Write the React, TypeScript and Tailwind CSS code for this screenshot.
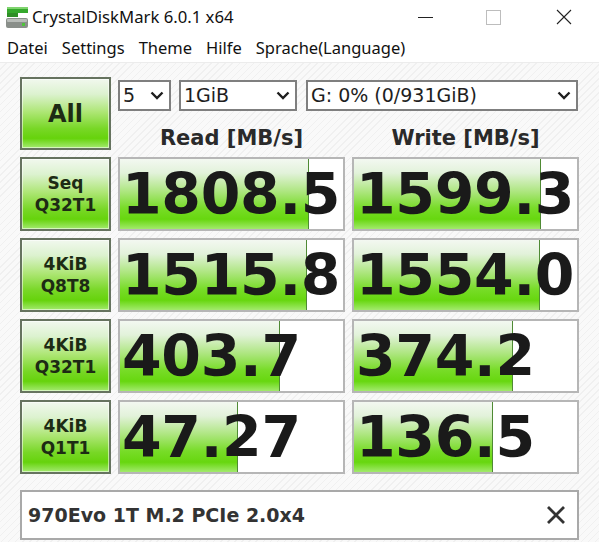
const labelFont = "font-['DejaVu_Sans','Verdana',sans-serif]";

type Row = {
  label: [string, string];
  read: string;
  write: string;
  readBar: number;
  writeBar: number;
};

const ROWS: Row[] = [
  { label: ["Seq", "Q32T1"], read: "1808.5", write: "1599.3", readBar: 189, writeBar: 187 },
  { label: ["4KiB", "Q8T8"], read: "1515.8", write: "1554.0", readBar: 187, writeBar: 186 },
  { label: ["4KiB", "Q32T1"], read: "403.7", write: "374.2", readBar: 160, writeBar: 159 },
  { label: ["4KiB", "Q1T1"], read: "47.27", write: "136.5", readBar: 118, writeBar: 139 },
];

const greenButton =
  "border-2 border-[#66735f] bg-[linear-gradient(180deg,#f1f8ee_0%,#dcf2cf_22%,#ade674_48%,#78d726_72%,#66d30c_86%,#a4ea70_100%)] shadow-[inset_0_0_0_1px_rgba(255,255,255,0.55)]";

const barFill =
  "bg-[linear-gradient(180deg,#f3f8f1_0%,#e2f2da_20%,#aee681_46%,#78dc28_70%,#67d70f_86%,#a2ea6c_100%)]";

function Chevron() {
  return (
    <svg width="14" height="9" viewBox="0 0 14 9" aria-hidden>
      <polyline
        points="1.5,1.5 7,7 12.5,1.5"
        fill="none"
        stroke="#1e1e1e"
        strokeWidth="2.4"
      />
    </svg>
  );
}

function Select({ value, className }: { value: string; className: string }) {
  return (
    <div
      className={`flex h-[31px] items-center justify-between border-2 border-[#7f7f7f] bg-white pl-[3px] pr-[5px] text-[19px] leading-none text-[#1e1e1e] font-['DejaVu_Sans',sans-serif] ${className}`}
    >
      <span>{value}</span>
      <Chevron />
    </div>
  );
}

function ScoreCell({ value, bar }: { value: string; bar: number }) {
  return (
    <div className="relative flex h-[74px] w-[227px] items-center border-2 border-[#b6b6b6] bg-white">
      <div
        className={`absolute inset-y-0 left-0 border-r border-[#4f8a34] ${barFill}`}
        style={{ width: bar }}
      />
      <span
        className={`relative whitespace-nowrap pl-[2px] text-[57px] font-bold leading-none tracking-[-0.3px] text-[#1a1a1a] ${labelFont}`}
      >
        {value}
      </span>
    </div>
  );
}

function AppLogo() {
  return (
    <svg width="24" height="24" viewBox="0 0 24 24" aria-hidden>
      <rect x="2" y="2" width="21" height="6" fill="#35a82c" />
      <rect x="2" y="2" width="21" height="2" fill="#7fd46e" />
      <rect x="2" y="8" width="11" height="4" fill="#2f8f27" />
      <rect x="1" y="13" width="22" height="10" rx="2" fill="#8a8f8a" />
      <rect x="2" y="14" width="20" height="3" rx="1" fill="#b9bdb9" />
      <rect x="17" y="18" width="3" height="3" fill="#4ec43a" />
    </svg>
  );
}

export default function App() {
  return (
    <div className="flex h-[542px] w-[599px] flex-col overflow-hidden bg-white font-['Noto_Sans','Open_Sans',sans-serif]">
      <div className="flex h-[34px] items-center">
        <div className="flex w-[32px] justify-center pl-[2px]">
          <AppLogo />
        </div>
        <span className="text-[16.7px] text-[#111]">CrystalDiskMark 6.0.1 x64</span>
        <div className="ml-auto flex h-full items-center">
          <div className="flex w-[46px] justify-center">
            <div className="h-px w-[15px] bg-[#222]" />
          </div>
          <div className="ml-[22px] flex w-[46px] justify-center">
            <div className="h-[15px] w-[15px] border border-[#bdbdbd]" />
          </div>
          <div className="ml-[25px] mr-[12px] flex w-[46px] justify-center">
            <svg width="16" height="16" viewBox="0 0 16 16" aria-hidden>
              <path d="M1 1 L15 15 M15 1 L1 15" stroke="#222" strokeWidth="1.1" />
            </svg>
          </div>
        </div>
      </div>

      <div className="flex h-[28px] items-center text-[16.5px] text-[#111]">
        <span className="pl-[7px] pr-[7px]">Datei</span>
        <span className="px-[7px]">Settings</span>
        <span className="px-[7px]">Theme</span>
        <span className="px-[7px]">Hilfe</span>
        <span className="px-[7px]">Sprache(Language)</span>
      </div>

      <div className="flex-1 border-t border-[#ececec] bg-[repeating-linear-gradient(135deg,#f9f9f9_0px,#f9f9f9_4px,#f0f0f0_4px,#f0f0f0_5px)] px-[20px] pt-[14px]">
        <div className="flex gap-[7px]">
          <div
            className={`flex h-[73px] w-[91px] items-center justify-center ${greenButton}`}
          >
            <span className={`text-[24px] font-bold text-[#1d2b14] ${labelFont}`}>All</span>
          </div>
          <div className="flex flex-col">
            <div className="mt-[3px] flex">
              <Select value="5" className="w-[53px]" />
              <Select value="1GiB" className="ml-[8px] w-[118px]" />
              <Select value="G: 0% (0/931GiB)" className="ml-[9px] w-[272px]" />
            </div>
            <div className="flex gap-[7px] pt-[15px]">
              <div
                className={`w-[227px] text-center text-[21px] font-bold leading-[24px] text-[#2a2a2a] ${labelFont}`}
              >
                Read [MB/s]
              </div>
              <div
                className={`w-[227px] text-center text-[21px] font-bold leading-[24px] text-[#2a2a2a] ${labelFont}`}
              >
                Write [MB/s]
              </div>
            </div>
          </div>
        </div>

        <div className="mt-[7px] flex flex-col gap-[7px]">
          {ROWS.map((row) => (
            <div key={row.label.join("-") + row.read} className="flex gap-[7px]">
              <div
                className={`flex h-[74px] w-[91px] flex-col items-center justify-center ${greenButton}`}
              >
                <span className={`text-[17px] font-bold leading-[22px] text-[#1d2b14] ${labelFont}`}>
                  {row.label[0]}
                </span>
                <span className={`text-[17px] font-bold leading-[22px] text-[#1d2b14] ${labelFont}`}>
                  {row.label[1]}
                </span>
              </div>
              <ScoreCell value={row.read} bar={row.readBar} />
              <ScoreCell value={row.write} bar={row.writeBar} />
            </div>
          ))}
        </div>

        <div className="mt-[16px] flex h-[50px] items-center justify-between border-2 border-[#a9a9a9] bg-white pl-[6px] pr-[11px]">
          <span className={`text-[19px] font-bold text-[#333] ${labelFont}`}>
            970Evo 1T M.2 PCIe 2.0x4
          </span>
          <svg width="20" height="20" viewBox="0 0 20 20" aria-hidden>
            <path d="M2 2 L18 18 M18 2 L2 18" stroke="#333" strokeWidth="2.8" />
          </svg>
        </div>
      </div>
    </div>
  );
}
